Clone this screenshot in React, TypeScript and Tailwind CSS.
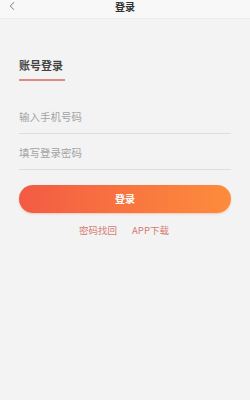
import { ChevronLeft } from 'lucide-react';

export default function App() {
  return (
    <div
      className="w-[250px] h-[400px] bg-[#f3f3f3] flex flex-col"
      style={{ fontFamily: '"Noto Sans CJK SC", "Noto Sans", sans-serif' }}
    >
      {/* Header */}
      <div className="h-[19px] bg-[#f8f8f8] border-b border-[#ececec] relative flex items-start justify-center">
        <ChevronLeft className="absolute left-[5px] top-[-1px] h-[14px] w-[14px] text-[#666]" strokeWidth={1.5} />
        <span className="mt-[1px] text-[10px] leading-[12px] font-bold text-[#333]">登录</span>
      </div>

      <div className="px-[19px] flex flex-col">
        {/* Tab */}
        <div className="mt-[39px] w-[46px] flex flex-col">
          <span className="text-[11px] leading-[14px] font-bold text-[#444]">账号登录</span>
          <div className="mt-[7px] h-[1.5px] bg-[#e08a80]" />
        </div>

        {/* Inputs */}
        <div className="mt-[27px] h-[26px] flex items-center border-b border-[#dedede] pb-[7px]">
          <span className="text-[10.5px] text-[#a3a3a3]">输入手机号码</span>
        </div>
        <div className="mt-[10px] h-[26px] flex items-center border-b border-[#dedede] pb-[7px]">
          <span className="text-[10.5px] text-[#a3a3a3]">填写登录密码</span>
        </div>

        {/* Button */}
        <div className="mt-[15px] h-[28px] rounded-full bg-gradient-to-r from-[#f35a43] to-[#fd8c3b] flex items-center justify-center shadow-[0_1px_2px_rgba(240,100,60,0.3)]">
          <span className="text-[10px] font-bold text-white">登录</span>
        </div>

        {/* Links */}
        <div className="mt-[10px] flex justify-center gap-[15px] pr-[2px]">
          <span className="text-[9.5px] text-[#d57c72]">密码找回</span>
          <span className="text-[9.5px] text-[#d57c72]">APP下载</span>
        </div>
      </div>
    </div>
  );
}
